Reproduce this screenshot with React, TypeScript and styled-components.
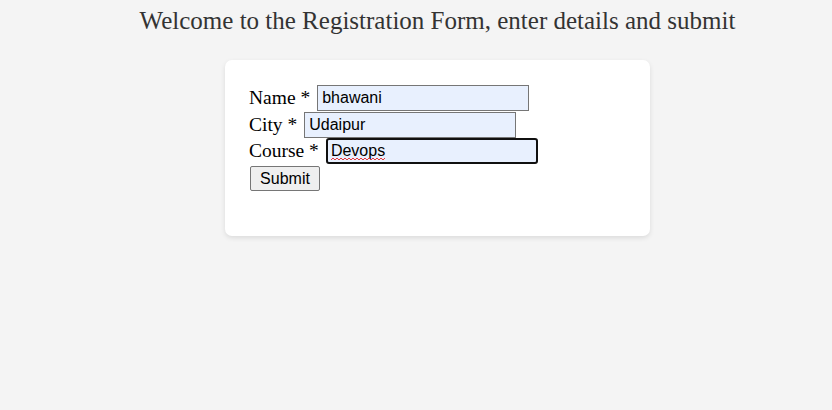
import React from "react";
import styled, { createGlobalStyle } from "styled-components";

const Global = createGlobalStyle`
  html, body { margin: 0; padding: 0; background: #f4f4f4; }
  body { font-family: "Liberation Serif", "Times New Roman", serif; color: #000; }
`;

const Page = styled.div`
  width: 100%;
  box-sizing: border-box;
  padding-left: 43px;
  display: flex;
  flex-direction: column;
  align-items: center;
  min-height: 410px;
`;

const Title = styled.h1`
  margin: 6px 0 0;
  font-size: 25px;
  font-weight: normal;
  line-height: 29px;
  color: #333;
  white-space: nowrap;
`;

const Card = styled.div`
  margin-top: 25px;
  width: 425px;
  box-sizing: border-box;
  background: #fff;
  border-radius: 7px;
  box-shadow: 0 2px 5px rgba(0, 0, 0, 0.1);
  padding: 25px 24px 45px;
`;

const Form = styled.form`
  display: flex;
  flex-direction: column;
  align-items: flex-start;
`;

const Row = styled.div<{ $mt?: number }>`
  display: flex;
  align-items: center;
  gap: 7px;
  height: 26px;
  margin-top: ${(p) => p.$mt ?? 0}px;
`;

const Label = styled.label`
  font-size: 19.5px;
  line-height: 26px;
  white-space: nowrap;
  margin-top: -1px;
`;

const FieldWrap = styled.span`
  position: relative;
  display: inline-flex;
`;

const Field = styled.input<{ $focus?: boolean }>`
  width: 212px;
  height: 26px;
  box-sizing: border-box;
  margin: 0;
  padding: 1px 4px;
  font-family: "Liberation Sans", Arial, sans-serif;
  font-size: 16px;
  color: #000;
  background: #e8f0fe;
  border: 1px solid #767676;
  border-radius: 0;
  outline: none;
  ${(p) => (p.$focus ? "border: 2px solid #101010; border-radius: 3px; padding: 0 3px;" : "")}
`;

const SpellMark = styled.svg`
  position: absolute;
  left: 5px;
  top: 19px;
  width: 54px;
  height: 4px;
  pointer-events: none;
`;

const SubmitButton = styled.button`
  margin: 2px 0 0 1px;
  width: 70px;
  height: 25px;
  box-sizing: border-box;
  padding: 0;
  font-family: "Liberation Sans", Arial, sans-serif;
  font-size: 16px;
  color: #000;
  background: #efefef;
  border: 1px solid #767676;
  border-radius: 2px;
`;

function Wavy() {
  let d = "M0 3";
  for (let x = 0; x < 54; x += 4) {
    d += ` L${x + 2} 1 L${x + 4} 3`;
  }
  return (
    <SpellMark viewBox="0 0 54 4">
      <path d={d} fill="none" stroke="#e5383b" strokeWidth="1" />
    </SpellMark>
  );
}

export default function App() {
  return (
    <>
      <Global />
      <Page>
        <Title>Welcome to the Registration Form, enter details and submit</Title>
        <Card>
          <Form onSubmit={(e) => e.preventDefault()}>
            <Row>
              <Label>Name *</Label>
              <Field defaultValue="bhawani" />
            </Row>
            <Row $mt={1}>
              <Label>City *</Label>
              <Field defaultValue="Udaipur" />
            </Row>
            <Row>
              <Label>Course *</Label>
              <FieldWrap>
                <Field $focus defaultValue="Devops" />
                <Wavy />
              </FieldWrap>
            </Row>
            <SubmitButton type="submit">Submit</SubmitButton>
          </Form>
        </Card>
      </Page>
    </>
  );
}
